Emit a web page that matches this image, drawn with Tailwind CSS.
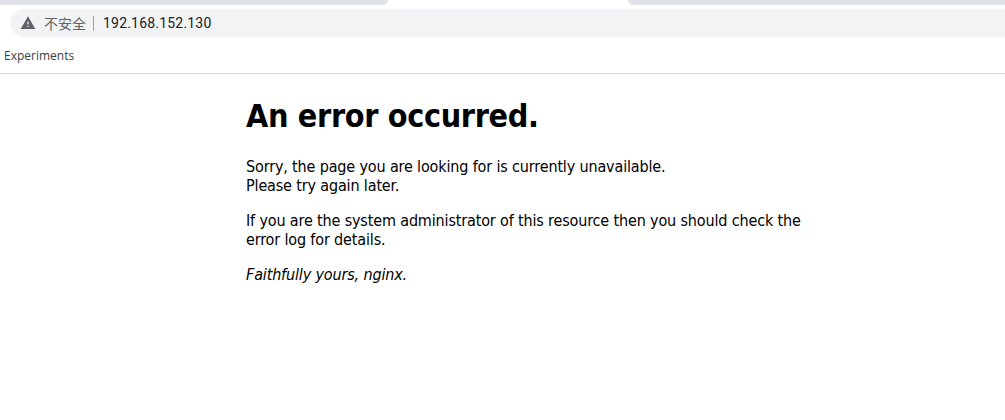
<!DOCTYPE html>
<html lang="en">
<head>
  <meta charset="UTF-8" />
  <title>Error</title>
  <script src="https://cdn.jsdelivr.net/npm/@tailwindcss/browser@4"></script>
</head>
<body class="bg-white h-[420px] overflow-hidden font-['DejaVu_Sans',sans-serif] text-black">
  <div class="h-[9px] bg-white">
    <div class="h-[5px] flex">
      <div class="w-[388px] bg-[#dee1e6] rounded-br-md"></div>
      <div class="w-[240px]"></div>
      <div class="flex-1 bg-[#dee1e6] rounded-bl-md"></div>
    </div>
  </div>
  <div class="h-[28px] ml-[10px] rounded-l-full bg-[#f1f3f4] flex items-center pl-[10px]">
    <svg class="w-[16px] h-[16px]" viewBox="0 0 24 24" fill="#5f6368"><path d="M1 21h22L12 2 1 21zm12-3h-2v-2h2v2zm0-4h-2v-4h2v4z"/></svg>
    <span class="ml-[8px] text-[14px] text-[#5f6368] font-['Noto_Sans_CJK_SC',sans-serif]">不安全</span>
    <span class="ml-[7px] w-px h-[15px] bg-[#9aa0a6]"></span>
    <span class="ml-[9px] text-[14px] tracking-[0.2px] text-[#202124] font-['Roboto',sans-serif]">192.168.152.130</span>
  </div>
  <div class="h-[37px] border-b border-[#d9d9d9] flex items-center pl-[4px] pt-[2px] text-[12px] text-[#3c4043] font-['Open_Sans',sans-serif]">Experiments</div>
  <main class="w-[560px] ml-[246px] text-[16px] leading-[19px] font-stretch-condensed tracking-[-0.15px]">
    <h1 class="mt-[23px] text-[32px] leading-[38px] font-bold tracking-[-0.33px]">An error occurred.</h1>
    <p class="mt-[22px]">Sorry, the page you are looking for is currently unavailable.<br />Please try again later.</p>
    <p class="mt-[16px]">If you are the system administrator of this resource then you should check the error log for details.</p>
    <p class="mt-[16px] italic">Faithfully yours, nginx.</p>
  </main>
</body>
</html>
